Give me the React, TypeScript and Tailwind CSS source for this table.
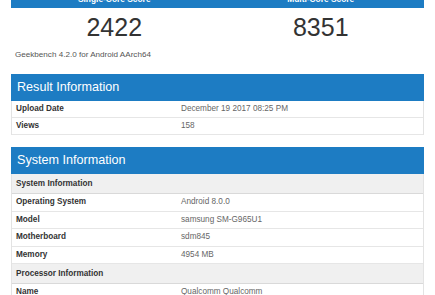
const font = { fontFamily: '"Liberation Sans", Arial, sans-serif' }

type Row = { label: string; value?: string; section?: boolean }

const resultRows: Row[] = [
  { label: 'Upload Date', value: 'December 19 2017 08:25 PM' },
  { label: 'Views', value: '158' },
]

const systemRows: Row[] = [
  { label: 'System Information', section: true },
  { label: 'Operating System', value: 'Android 8.0.0' },
  { label: 'Model', value: 'samsung SM-G965U1' },
  { label: 'Motherboard', value: 'sdm845' },
  { label: 'Memory', value: '4954 MB' },
  { label: 'Processor Information', section: true },
  { label: 'Name', value: 'Qualcomm Qualcomm' },
]

const InfoRow = ({ row, height }: { row: Row; height: string }) => {
  if (row.section) {
    return (
      <div className="flex h-[20px] items-center border-b border-[#d9d9d9] bg-[#f0f0f0] px-[4px] text-[8.2px] font-bold text-[#333]">
        {row.label}
      </div>
    )
  }
  return (
    <div className={`grid grid-cols-[165px_1fr] items-center border-b border-[#e6e6e6] ${height}`}>
      <span className="px-[4px] text-[8.2px] font-bold text-[#333]">{row.label}</span>
      <span className="px-[4px] text-[8.2px] text-[#666]">{row.value}</span>
    </div>
  )
}

const Panel = ({ title, rows, height }: { title: string; rows: Row[]; height: string }) => (
  <section className="mx-[11px]">
    <div className="flex h-[27px] items-center bg-[#1d7cc3] px-[6px] text-[12.6px] text-white">{title}</div>
    <div className="border-x border-[#e3e3e3]">
      {rows.map((row) => (
        <InfoRow key={row.label} row={row} height={height} />
      ))}
    </div>
  </section>
)

const App = () => {
  return (
    <div className="h-[295px] w-[435px] overflow-hidden bg-white" style={font}>
      <section className="mx-[11px] -mt-[18px]">
        <div className="grid h-[26px] grid-cols-2 bg-[#1d7cc3]">
          <div className="flex items-end justify-center pb-[4px] text-[8.4px] font-bold leading-[10px] text-white">
            Single-Core Score
          </div>
          <div className="flex items-end justify-center pb-[4px] text-[8.4px] font-bold leading-[10px] text-white">
            Multi-Core Score
          </div>
        </div>
        <div className="grid grid-cols-2 pt-[6.7px] text-[25px] leading-[25px] text-[#333]">
          <div className="text-center">2422</div>
          <div className="text-center">8351</div>
        </div>
        <p className="mt-[10.5px] px-[4px] text-[8.1px] leading-[10px] text-[#555]">Geekbench 4.2.0 for Android AArch64</p>
      </section>

      <div className="mt-[13.8px]">
        <Panel title="Result Information" rows={resultRows} height="h-[17px]" />
      </div>

      <div className="mt-[12.3px]">
        <Panel title="System Information" rows={systemRows} height="h-[17.5px]" />
      </div>
    </div>
  )
}

export default App
